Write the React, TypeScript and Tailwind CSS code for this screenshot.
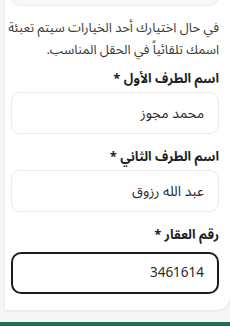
const FIELDS = [
  { label: "اسم الطرف الأول *", value: "محمد مجوز", active: false },
  { label: "اسم الطرف الثاني *", value: "عبد الله رزوق", active: false },
  { label: "رقم العقار *", value: "3461614", active: true },
];

export default function App() {
  return (
    <div
      dir="rtl"
      className="relative w-[230px] h-[326px] overflow-hidden bg-[#f4f7f6] text-[#2b2b2b]"
      style={{ fontFamily: '"Noto Sans Arabic", "Noto Sans", sans-serif' }}
    >
      <div className="w-[225px] bg-white rounded-br-[14px] shadow-[0_1px_3px_rgba(0,0,0,0.08)] pr-[11px] pl-[6px] pb-[16px]">
        {/* previous field, cut off at the top */}
        <div className="h-[43px] mt-[-37px] rounded-[9px] border border-[#ececec] bg-[#f7f7f7]" />

        <p className="mt-[11px] text-[13px] leading-[22px] text-[#3a3a3a] whitespace-nowrap">
          في حال اختيارك أحد الخيارات سيتم تعبئة
          <br />
          اسمك تلقائياً في الحقل المناسب.
        </p>

        {FIELDS.map((f, i) => (
          <div key={f.label} className={i === 0 ? "mt-[8px]" : "mt-[13px]"}>
            <label className="block text-[13px] leading-[20px] font-bold text-[#1f1f1f]">
              {f.label}
            </label>
            <div
              className={
                f.active
                  ? "mt-[7px] h-[42px] flex items-center rounded-[10px] border-2 border-[#1c1c1c] px-[13px] text-[13.5px] text-[#2b2b2b]"
                  : "mt-[3px] h-[42px] flex items-center rounded-[9px] border border-[#ececec] px-[14px] text-[14px] text-[#2b2b2b]"
              }
            >
              {f.value}
            </div>
          </div>
        ))}
      </div>

      <div className="absolute bottom-0 left-0 right-0 h-[4px] bg-[#1f6f57]" />
    </div>
  );
}
